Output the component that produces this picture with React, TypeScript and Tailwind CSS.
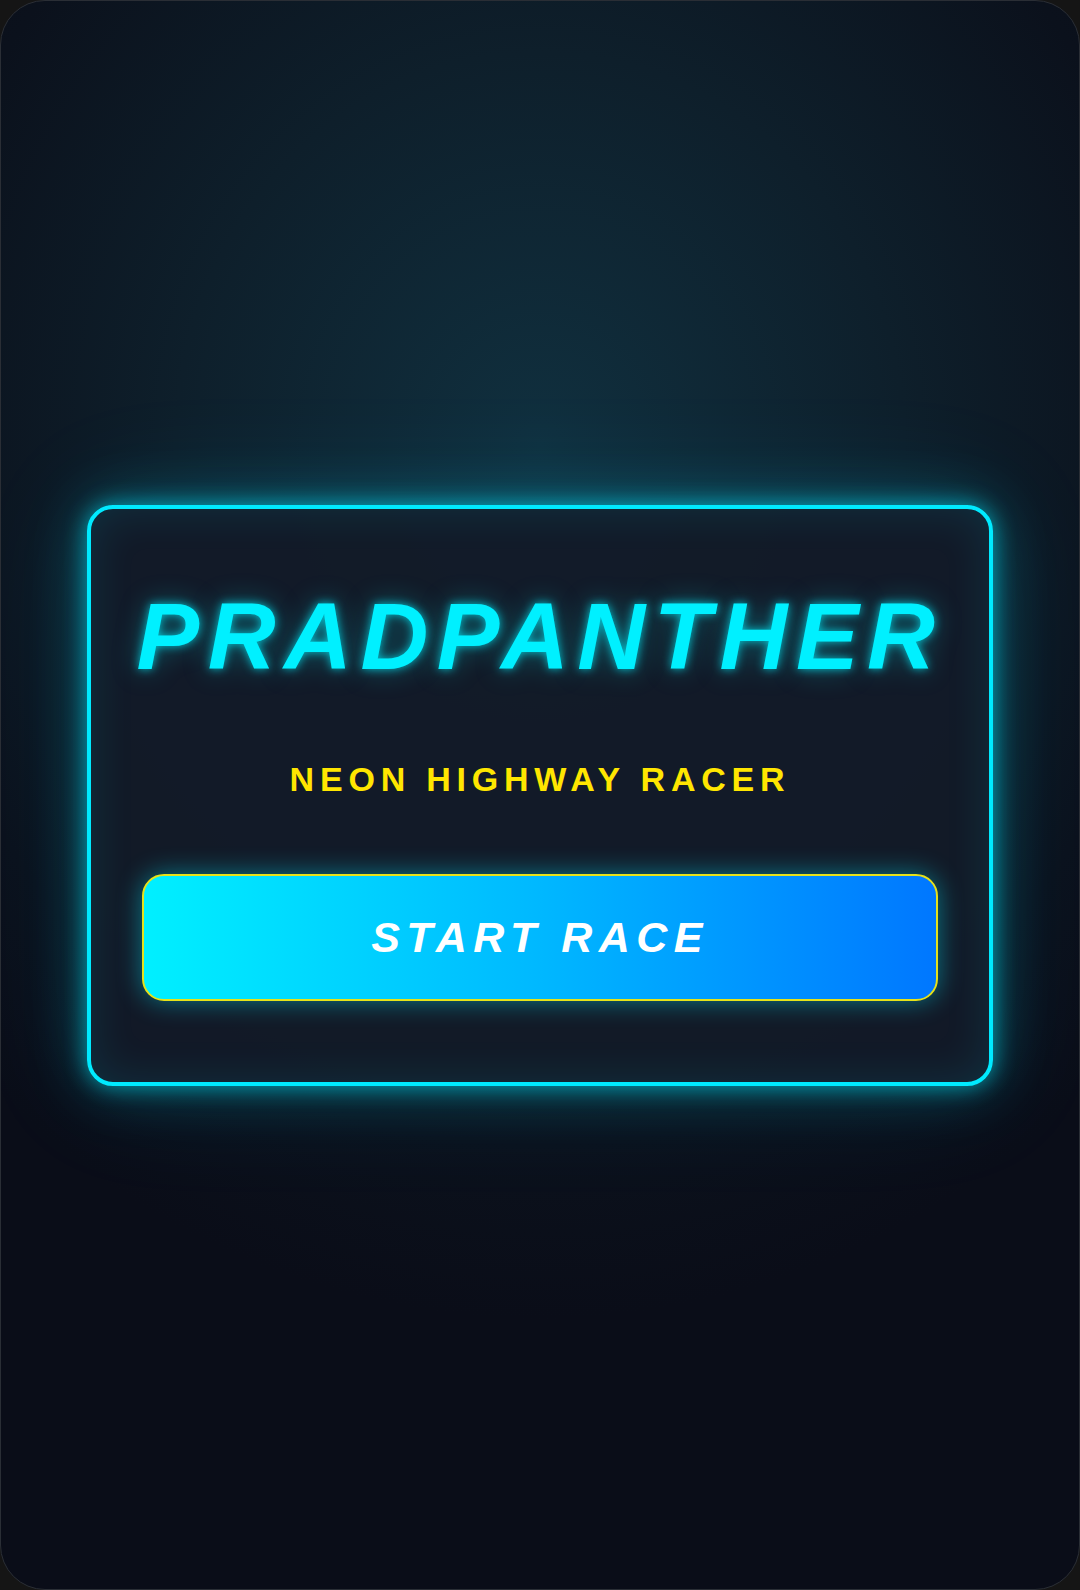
export default function App() {
  return (
    <div className="h-[1590px] w-[1080px] bg-[#151515]">
      <div className="flex h-full w-full items-center justify-center overflow-hidden rounded-[45px] border border-[#2a2e35] bg-[radial-gradient(ellipse_75%_55%_at_50%_28%,#10303f_0%,#0e1f2b_45%,#0b111c_80%,#0a0d18_100%)] font-['Liberation_Sans',Arial,sans-serif]">
        <div className="flex w-[906px] flex-col items-center rounded-[26px] border-4 border-[#00eaff] bg-[#131a28]/95 px-[51px] pt-[81px] pb-[81px] shadow-[0_0_22px_rgba(0,234,255,0.6),0_0_60px_rgba(0,234,255,0.28),0_0_120px_rgba(0,200,255,0.12),inset_0_0_45px_rgba(0,234,255,0.12)]">
          <h1 className="text-[94px] leading-none font-bold tracking-[0.09em] text-[#00f0ff] italic [text-shadow:0_0_10px_rgba(0,240,255,0.75),0_0_28px_rgba(0,240,255,0.35)]">
            PRADPANTHER
          </h1>
          <p className="mt-[78px] text-[34px] leading-none font-bold tracking-[0.17em] text-[#ffe600]">
            NEON HIGHWAY RACER
          </p>
          <button
            type="button"
            className="mt-[78px] flex h-[127px] w-full items-center justify-center rounded-[22px] border-2 border-[#e6e21a] bg-[linear-gradient(90deg,#00f0ff_0%,#00b8ff_50%,#0077ff_100%)] shadow-[0_0_26px_rgba(0,234,255,0.45)]"
          >
            <span className="text-[43px] leading-none font-bold tracking-[0.15em] text-white italic">
              START RACE
            </span>
          </button>
        </div>
      </div>
    </div>
  )
}
